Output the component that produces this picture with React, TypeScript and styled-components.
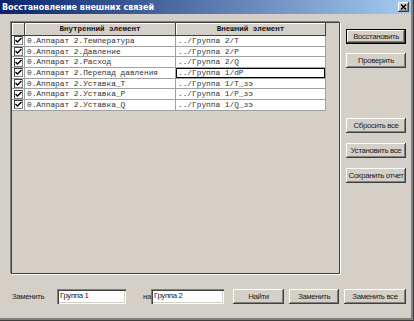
import React from 'react'
import styled, { createGlobalStyle } from 'styled-components'

const GlobalStyle = createGlobalStyle`
  html, body {
    margin: 0;
    padding: 0;
    background: #d4d0c8;
  }
  body {
    font-family: "Liberation Sans", Arial, sans-serif;
  }
`

const Window = styled.div`
  width: 414px;
  height: 321px;
  box-sizing: border-box;
  background: #d4d0c8;
  display: flex;
  flex-direction: column;
  border-right: 1px solid #404040;
  border-bottom: 1px solid #404040;
  box-shadow: inset -2px -2px 0 #808080;
  padding-right: 2px;
`

const TitleBar = styled.div`
  height: 14px;
  display: flex;
  align-items: center;
  justify-content: space-between;
  padding: 0 2px;
  background: linear-gradient(to right, #0a246a, #a6caf0);
`

const Title = styled.span`
  color: #fff;
  font-family: "DejaVu Sans", Verdana, sans-serif;
  font-weight: bold;
  font-size: 8px;
`

const CloseButton = styled.div`
  width: 11px;
  height: 10px;
  background: #d4d0c8;
  box-shadow: inset -1px -1px 0 #404040, inset 1px 1px 0 #fff, inset -2px -2px 0 #808080;
  display: flex;
  align-items: center;
  justify-content: center;
`

const Body = styled.div`
  flex: 1;
  display: flex;
  flex-direction: column;
  padding: 8px 0 0 11px;
`

const MainRow = styled.div`
  display: flex;
  align-items: flex-start;
`

const GridPanel = styled.div`
  width: 329px;
  height: 252px;
  box-sizing: border-box;
  border: 1px solid #404040;
  box-shadow: 1px 1px 0 #fff, -1px -1px 0 #808080;
  background: #d4d0c8;
  overflow: hidden;
`

const Table = styled.div`
  display: grid;
  grid-template-columns: 13px 151px 150px;
  grid-template-rows: 13px;
  grid-auto-rows: 10.7px;
`

const HeadCell = styled.div`
  background: #d4d0c8;
  border-right: 1px solid #404040;
  border-bottom: 1px solid #404040;
  box-shadow: inset 1px 1px 0 #fff;
  font-family: "Liberation Mono", "Courier New", monospace;
  font-weight: bold;
  font-size: 7.5px;
  color: #111;
  display: flex;
  align-items: center;
  justify-content: center;
  box-sizing: border-box;
`

const Cell = styled.div<{ $focus?: boolean }>`
  background: #fff;
  border-right: 1px solid #a0a0a0;
  border-bottom: 1px solid #a0a0a0;
  box-sizing: border-box;
  font-family: "Liberation Mono", "Courier New", monospace;
  font-size: 7.8px;
  color: #333;
  line-height: 10px;
  padding-left: 2px;
  white-space: nowrap;
  overflow: hidden;
  box-shadow: ${(p) => (p.$focus ? 'inset 0 0 0 1px #000' : 'none')};
`

const CheckCell = styled.div`
  background: #fff;
  border-right: 1px solid #a0a0a0;
  border-bottom: 1px solid #a0a0a0;
  box-sizing: border-box;
  display: flex;
  align-items: center;
  justify-content: center;
`

const CheckBox = styled.div`
  width: 9px;
  height: 9px;
  box-sizing: border-box;
  background: #fff;
  border-top: 1px solid #404040;
  border-left: 1px solid #404040;
  border-right: 1px solid #808080;
  border-bottom: 1px solid #808080;
  display: flex;
  align-items: center;
  justify-content: center;
`

const ButtonColumn = styled.div`
  display: flex;
  flex-direction: column;
  margin-left: 6px;
  padding-top: 7px;
  width: 60px;
`

const Button = styled.div<{ $top?: number; $width?: number; $left?: number; $default?: boolean }>`
  width: ${(p) => p.$width ?? 60}px;
  height: 15px;
  margin-top: ${(p) => p.$top ?? 0}px;
  margin-left: ${(p) => p.$left ?? 0}px;
  box-sizing: border-box;
  background: #d4d0c8;
  border: ${(p) => (p.$default ? '1px solid #000' : 'none')};
  box-shadow: inset -1px -1px 0 #404040, inset 1px 1px 0 #fff, inset -2px -2px 0 #808080;
  font-size: 7.8px;
  letter-spacing: -0.35px;
  color: #222;
  display: flex;
  align-items: center;
  justify-content: center;
  white-space: nowrap;
  flex-shrink: 0;
`

const BottomRow = styled.div`
  display: flex;
  align-items: center;
  margin-top: 15px;
  height: 15px;
`

const Label = styled.span<{ $width: number; $pad?: number }>`
  width: ${(p) => p.$width}px;
  padding-left: ${(p) => p.$pad ?? 0}px;
  box-sizing: border-box;
  font-size: 7.8px;
  letter-spacing: -0.35px;
  color: #222;
  flex-shrink: 0;
`

const Field = styled.div<{ $width: number }>`
  width: ${(p) => p.$width}px;
  height: 15px;
  box-sizing: border-box;
  background: #fff;
  box-shadow: inset 1px 1px 0 #808080, inset 2px 2px 0 #404040, inset -1px -1px 0 #fff, inset -2px -2px 0 #d4d0c8;
  font-size: 7.8px;
  letter-spacing: -0.35px;
  color: #222;
  padding: 2px 0 0 3px;
  flex-shrink: 0;
`

const rows = [
  ['0.Аппарат 2.Температура', '../Группа 2/T'],
  ['0.Аппарат 2.Давление', '../Группа 2/P'],
  ['0.Аппарат 2.Расход', '../Группа 2/Q'],
  ['0.Аппарат 2.Перепад давления', '../Группа 1/dP'],
  ['0.Аппарат 2.Уставка_T', '../Группа 1/T_зэ'],
  ['0.Аппарат 2.Уставка_P', '../Группа 1/P_зэ'],
  ['0.Аппарат 2.Уставка_Q', '../Группа 1/Q_зэ'],
]

function Check() {
  return (
    <svg width="7" height="7" viewBox="0 0 7 7">
      <path d="M0.5 3 L2.5 5 L6.5 1" stroke="#000" strokeWidth="1.4" fill="none" />
    </svg>
  )
}

export default function App() {
  return (
    <>
      <GlobalStyle />
      <Window>
        <TitleBar>
          <Title>Восстановление внешних связей</Title>
          <CloseButton>
            <svg width="7" height="6" viewBox="0 0 7 6">
              <path d="M1 0.5 L6 5.5 M6 0.5 L1 5.5" stroke="#000" strokeWidth="1.5" />
            </svg>
          </CloseButton>
        </TitleBar>
        <Body>
          <MainRow>
            <GridPanel>
              <Table>
                <HeadCell />
                <HeadCell>Внутренний элемент</HeadCell>
                <HeadCell>Внешний элемент</HeadCell>
                {rows.map(([inner, outer], i) => (
                  <React.Fragment key={inner}>
                    <CheckCell>
                      <CheckBox>
                        <Check />
                      </CheckBox>
                    </CheckCell>
                    <Cell>{inner}</Cell>
                    <Cell $focus={i === 3}>{outer}</Cell>
                  </React.Fragment>
                ))}
              </Table>
            </GridPanel>
            <ButtonColumn>
              <Button $default>Восстановить</Button>
              <Button $top={9}>Проверить</Button>
              <Button $top={50}>Сбросить все</Button>
              <Button $top={10}>Установить все</Button>
              <Button $top={10}>Сохранить отчет</Button>
            </ButtonColumn>
          </MainRow>
          <BottomRow>
            <Label $width={46} $pad={1}>Заменить</Label>
            <Field $width={69}>Группа 1</Field>
            <Label $width={25} $pad={17}>на</Label>
            <Field $width={73}>Группа 2</Field>
            <Button $width={51} $left={9}>Найти</Button>
            <Button $width={50} $left={5}>Заменить</Button>
            <Button $width={62} $left={5}>Заменить все</Button>
          </BottomRow>
        </Body>
      </Window>
    </>
  )
}
